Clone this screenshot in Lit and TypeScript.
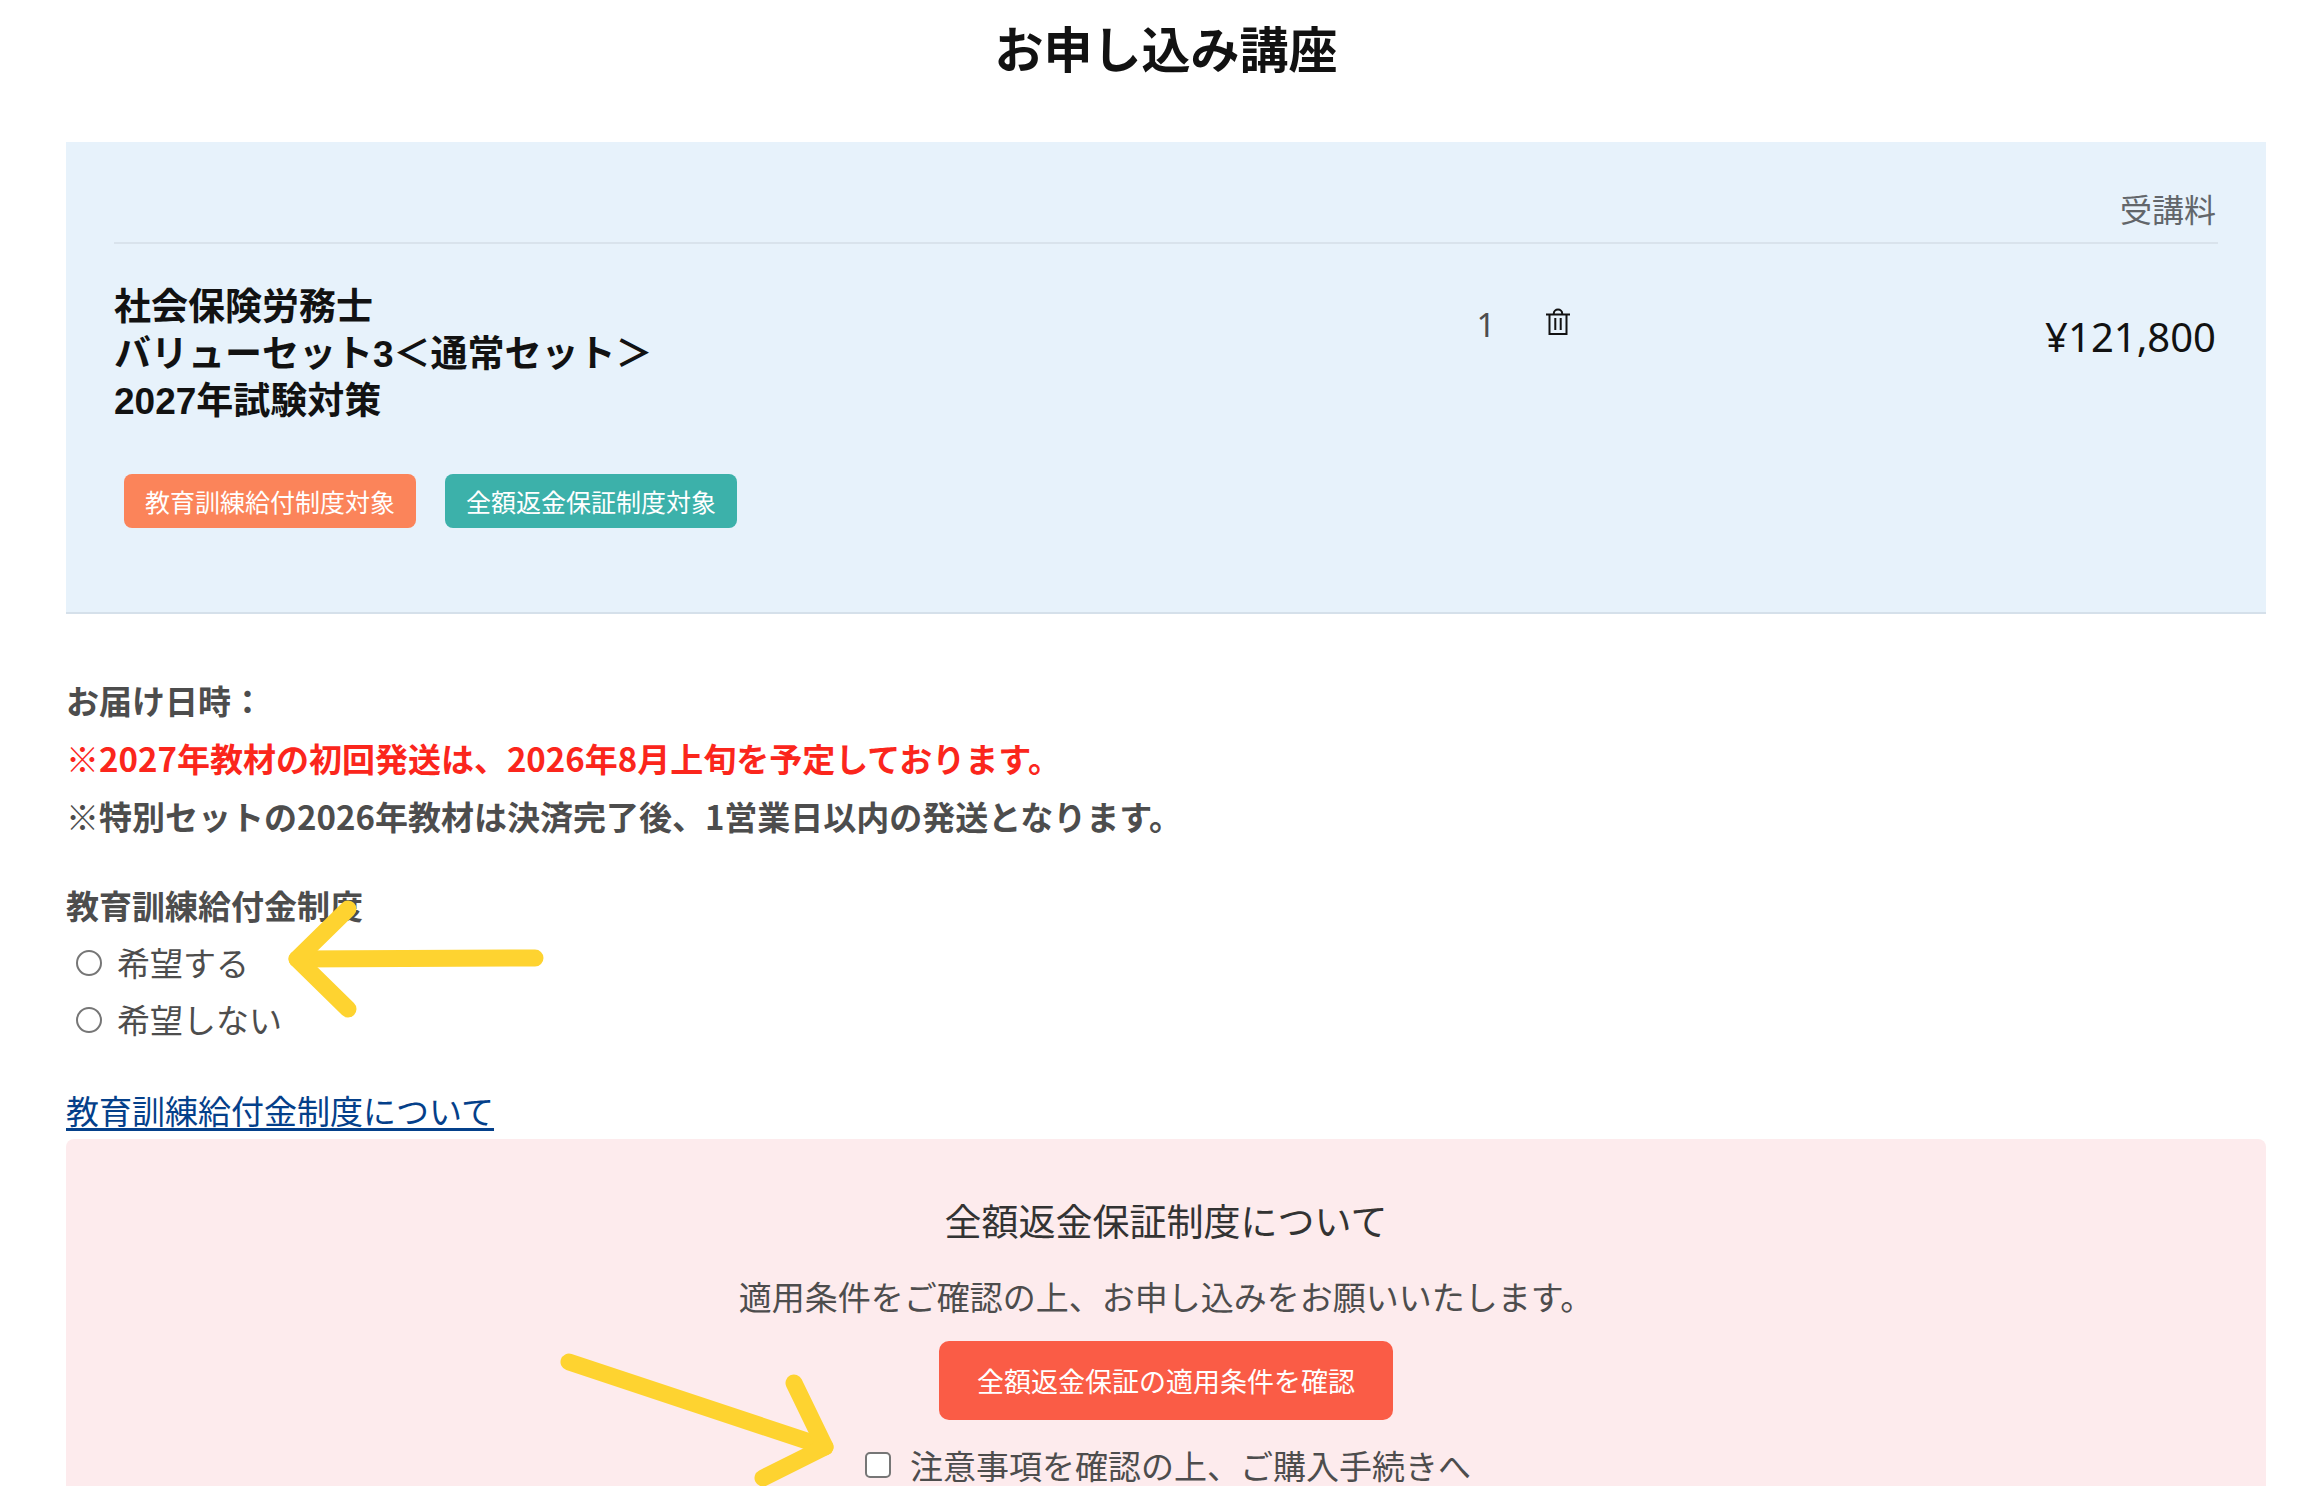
import { LitElement, html, css } from "lit";
import { customElement, property, state } from "lit/decorators.js";

interface CartTag {
  label: string;
  tone: "orange" | "teal";
}

interface CartItem {
  lines: string[];
  quantity: number;
  price: number;
  tags: CartTag[];
}

const ITEMS: CartItem[] = [
  {
    lines: ["社会保険労務士", "バリューセット3＜通常セット＞", "2027年試験対策"],
    quantity: 1,
    price: 121800,
    tags: [
      { label: "教育訓練給付制度対象", tone: "orange" },
      { label: "全額返金保証制度対象", tone: "teal" },
    ],
  },
];

/** Table of the courses in the cart, with their fee. */
@customElement("cart-items")
export class CartItems extends LitElement {
  @property({ attribute: false }) items: CartItem[] = [];

  static styles = css`
    :host {
      display: block;
      padding: 0 48px 84px;
      background: #e7f2fb;
      border-bottom: 2px solid #d5e0ea;
    }
    .table {
      width: 100%;
      border-collapse: separate;
      border-spacing: 0;
      table-layout: fixed;
    }
    .col-name {
      width: 64%;
    }
    .head {
      padding: 42px 2px 10px 0;
      border-bottom: 2px solid #d9e3ec;
      font-size: 32px;
      font-weight: 400;
      line-height: 48px;
      color: #62666a;
      text-align: right;
    }
    .cell {
      padding: 40px 0 0;
      vertical-align: top;
    }
    .name {
      margin: 0;
      font-family: "Liberation Sans", "Noto Sans CJK JP", sans-serif;
      font-size: 37px;
      font-weight: 700;
      line-height: 47px;
      color: #121212;
    }
    .line {
      display: block;
    }
    .tags {
      display: flex;
      gap: 29px;
      margin: 49px 0 0 10px;
      padding: 0;
      list-style: none;
    }
    .tag {
      padding: 0 21px;
      border-radius: 8px;
      font-size: 25px;
      line-height: 54px;
      color: #fff;
    }
    .orange {
      background: #fb845a;
    }
    .teal {
      background: #3cb1aa;
    }
    .amount {
      display: flex;
      align-items: center;
      gap: 50px;
      padding: 17px 0 0 16px;
      font-family: "Noto Sans", "Noto Sans CJK JP", sans-serif;
      font-size: 33px;
      line-height: 48px;
    }
    .remove {
      display: flex;
      padding: 0 0 6px;
      border: 0;
      background: none;
      color: #121212;
      cursor: pointer;
    }
    .icon {
      display: block;
      width: 26px;
      height: 28px;
    }
    .price {
      padding: 29px 2px 0 0;
      font-family: "Noto Sans", "Noto Sans CJK JP", sans-serif;
      font-size: 40px;
      line-height: 48px;
      color: #121212;
      text-align: right;
    }
  `;

  private remove(item: CartItem) {
    this.dispatchEvent(new CustomEvent("remove-item", { detail: item }));
  }

  render() {
    return html`
      <table class="table">
        <colgroup>
          <col class="col-name" />
          <col />
          <col />
        </colgroup>
        <thead>
          <tr>
            <td class="head"></td>
            <td class="head"></td>
            <th class="head" scope="col">受講料</th>
          </tr>
        </thead>
        <tbody>
          ${this.items.map(
            (item) => html`
              <tr>
                <td class="cell">
                  <h2 class="name">
                    ${item.lines.map((line) => html`<span class="line">${line}</span>`)}
                  </h2>
                  <ul class="tags">
                    ${item.tags.map((tag) => html`<li class="tag ${tag.tone}">${tag.label}</li>`)}
                  </ul>
                </td>
                <td class="cell">
                  <div class="amount">
                    <span>${item.quantity}</span>
                    <button class="remove" type="button" aria-label="削除" @click=${() => this.remove(item)}>
                      <svg class="icon" viewBox="0 0 26 28" fill="none" stroke="currentColor" stroke-width="2" aria-hidden="true">
                        <path d="M1 6.5H25" />
                        <path d="M4.500 6.500V26H21.500V6.500" />
                        <path d="M8.800 6.500V5.500A4.200 4 0 0 1 17.200 5.500V6.500" />
                        <path d="M10.300 10V22M15.700 10V22" />
                      </svg>
                    </button>
                  </div>
                </td>
                <td class="cell">
                  <div class="price">¥${item.price.toLocaleString("en-US")}</div>
                </td>
              </tr>
            `,
          )}
        </tbody>
      </table>
    `;
  }
}

@customElement("app-root")
export class AppRoot extends LitElement {
  @state() private items = ITEMS;
  @state() private agreed = false;

  static styles = css`
    :host {
      display: block;
      padding: 0 46px 0 66px;
      background: #fff;
      font-family: "Noto Sans CJK JP", sans-serif;
      font-size: 33px;
      line-height: 58px;
      color: #4d4d4d;
    }
    .title {
      margin: 0 0 48px;
      font-size: 49px;
      font-weight: 700;
      line-height: 94px;
      color: #121212;
      text-align: center;
    }
    .delivery {
      margin-top: 57px;
      font-weight: 700;
    }
    .note {
      margin: 0;
    }
    .alert {
      color: #fb261c;
    }
    .benefit {
      position: relative;
      min-width: 0;
      margin: 31px 0 0;
      padding: 0;
      border: 0;
    }
    .legend {
      padding: 0;
      font-weight: 700;
    }
    .option {
      display: flex;
      align-items: center;
      gap: 15px;
      padding-left: 10px;
      line-height: 57px;
    }
    .control {
      box-sizing: border-box;
      width: 26px;
      height: 26px;
      margin: 0;
      appearance: none;
      border: 2px solid #767676;
      background: #fff;
    }
    .radio {
      border-radius: 50%;
    }
    .check {
      border-radius: 5px;
    }
    .control:checked {
      border-color: #04408a;
      background: #04408a;
      box-shadow: inset 0 0 0 4px #fff;
    }
    .about {
      margin: 33px 0 0;
    }
    .link {
      color: #04408a;
      text-decoration-thickness: 3px;
      text-underline-offset: 4px;
      text-decoration-skip-ink: none;
    }
    .refund {
      position: relative;
      display: flex;
      flex-direction: column;
      align-items: center;
      padding-top: 57px;
      border-radius: 8px 8px 0 0;
      background: #fdebed;
    }
    .refund-title {
      margin: 0 0 23px;
      font-size: 37px;
      font-weight: 400;
      line-height: 48px;
      color: #333;
    }
    .refund-text {
      margin: 0 0 16px;
    }
    .terms {
      padding: 0 38px;
      border: 0;
      border-radius: 10px;
      background: #fa5c46;
      font-family: inherit;
      font-size: 27px;
      line-height: 79px;
      color: #fff;
      cursor: pointer;
    }
    .agree {
      display: flex;
      align-items: center;
      gap: 19px;
      margin-top: 24px;
      padding-left: 4px;
      line-height: 42px;
    }
    .arrow {
      position: absolute;
      fill: none;
      stroke: #fed330;
      stroke-width: 17;
      stroke-linecap: round;
      stroke-linejoin: round;
      pointer-events: none;
    }
    .arrow-left {
      top: -37px;
      left: 220px;
      width: 260px;
      height: 124px;
    }
    .arrow-right {
      top: 211px;
      left: calc(50% - 608px);
      width: 280px;
      height: 137px;
    }
  `;

  private onRemove(event: CustomEvent<CartItem>) {
    this.items = this.items.filter((item) => item !== event.detail);
  }

  private onAgree(event: Event) {
    this.agreed = (event.target as HTMLInputElement).checked;
  }

  render() {
    return html`
      <h1 class="title">お申し込み講座</h1>
      <cart-items .items=${this.items} @remove-item=${this.onRemove}></cart-items>

      <section class="delivery">
        <p class="note">お届け日時：</p>
        <p class="note alert">※2027年教材の初回発送は、2026年8月上旬を予定しております。</p>
        <p class="note">※特別セットの2026年教材は決済完了後、1営業日以内の発送となります。</p>
      </section>

      <fieldset class="benefit" id="benefit">
        <legend class="legend">教育訓練給付金制度</legend>
        <div class="option">
          <input class="control radio" type="radio" name="benefit" id="benefit-yes" value="yes" />
          <label for="benefit-yes">希望する</label>
        </div>
        <div class="option">
          <input class="control radio" type="radio" name="benefit" id="benefit-no" value="no" />
          <label for="benefit-no">希望しない</label>
        </div>
        <svg class="arrow arrow-left" viewBox="0 0 260 124" aria-hidden="true">
          <path d="M249 61L11 62" />
          <path d="M62 12L11 62L62 112" />
        </svg>
      </fieldset>

      <p class="about"><a class="link" href="#benefit">教育訓練給付金制度について</a></p>

      <section class="refund">
        <h2 class="refund-title">全額返金保証制度について</h2>
        <p class="refund-text">適用条件をご確認の上、お申し込みをお願いいたします。</p>
        <button class="terms" type="button">全額返金保証の適用条件を確認</button>
        <div class="agree">
          <input class="control check" type="checkbox" id="agree" .checked=${this.agreed} @change=${this.onAgree} />
          <label for="agree">注意事項を確認の上、ご購入手続きへ</label>
        </div>
        <svg class="arrow arrow-right" viewBox="0 0 280 137" aria-hidden="true">
          <path d="M11 12L267 97" />
          <path d="M236 33L267 97L205 128" />
        </svg>
      </section>
    `;
  }
}
